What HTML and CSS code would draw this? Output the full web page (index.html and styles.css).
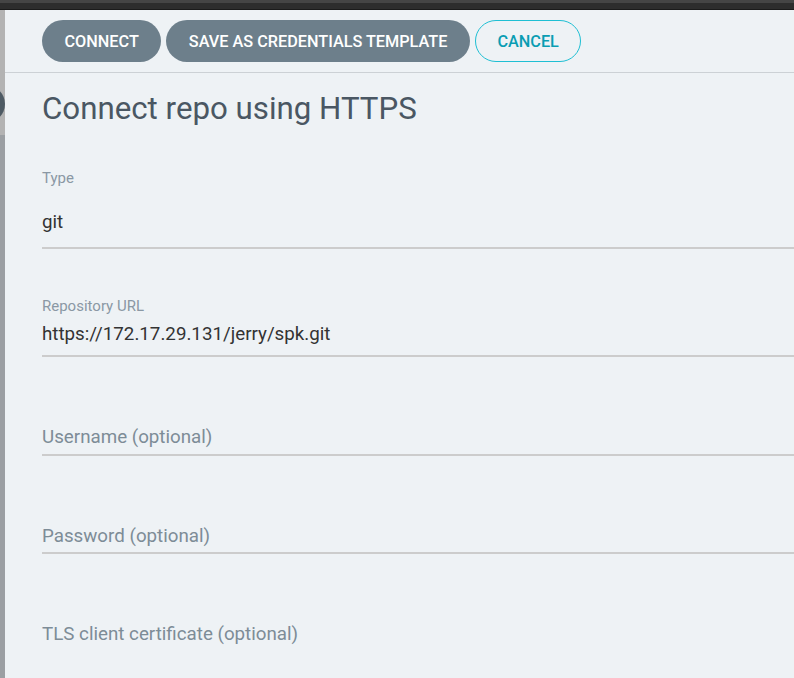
FILE: index.html
```html
<!DOCTYPE html>
<html lang="en">
<head>
    <meta charset="UTF-8">
    <meta name="viewport" content="width=device-width, initial-scale=1.0">
    <title>Connect repo using HTTPS</title>
    <link rel="stylesheet" href="styles.css">
</head>
<body>
    <div class="topbar"></div>
    <div class="layout">
        <div class="backdrop">
            <div class="backdrop-top">
                <div class="backdrop-dot"></div>
            </div>
            <div class="backdrop-bottom"></div>
        </div>

        <div class="panel">
            <div class="panel-header">
                <button class="btn">Connect</button>
                <button class="btn">Save as credentials template</button>
                <button class="btn btn-outline">Cancel</button>
            </div>

            <div class="panel-body">
                <h2 class="panel-title">Connect repo using HTTPS</h2>

                <div class="field field-select">
                    <div class="field-label">Type</div>
                    <div class="field-input">git</div>
                </div>

                <div class="field">
                    <div class="field-label">Repository URL</div>
                    <div class="field-input">https://172.17.29.131/jerry/spk.git</div>
                </div>

                <div class="field field-empty">
                    <div class="field-input placeholder">Username (optional)</div>
                </div>

                <div class="field field-empty">
                    <div class="field-input placeholder">Password (optional)</div>
                </div>

                <div class="field field-empty">
                    <div class="field-input field-textarea placeholder">TLS client certificate (optional)</div>
                </div>
            </div>
        </div>
    </div>
</body>
</html>
```

FILE: styles.css
```css
* {
    margin: 0;
    padding: 0;
    box-sizing: border-box;
}

body {
    font-family: Roboto, "Liberation Sans", Arial, sans-serif;
    background: #9b9fa3;
    height: 100vh;
    overflow: hidden;
}

.topbar {
    height: 10px;
    background: #2d2d2d;
    border-top: 3px solid #454545;
    border-bottom: 1px solid #1b1b1b;
}

.layout {
    display: flex;
    height: calc(100vh - 10px);
}

/* strip of the page behind the sliding panel */
.backdrop {
    width: 5px;
    flex-shrink: 0;
    display: flex;
    flex-direction: column;
    overflow: hidden;
}

.backdrop-top {
    height: 125px;
    background: #b3b3b3;
    padding-top: 75px;
}

.backdrop-dot {
    width: 38px;
    height: 38px;
    margin-left: -33px;
    border-radius: 50%;
    background: #4e5b64;
}

.backdrop-bottom {
    flex: 1;
    background: #9b9fa3;
}

.panel {
    flex: 1;
    background: #eef2f5;
    overflow: hidden;
}

.panel-header {
    display: flex;
    gap: 5px;
    padding: 10px 0 10px 37px;
    border-bottom: 1px solid #ccd1d5;
}

.btn {
    height: 42px;
    padding: 0 22.5px;
    border: none;
    border-radius: 21px;
    background: #6d7f8b;
    color: #fff;
    font-family: inherit;
    font-size: 16.25px;
    font-weight: 500;
    text-transform: uppercase;
    cursor: pointer;
}

.btn-outline {
    background: transparent;
    border: 1px solid #1fbfd3;
    color: #0a9db3;
    padding: 0 21.5px;
}

.panel-body {
    padding-left: 37px;
}

.panel-title {
    margin-top: 18px;
    font-size: 31.25px;
    line-height: 36px;
    font-weight: 400;
    color: #4a5763;
}

.field {
    margin-top: 49px;
}

.field-select {
    margin-top: 43px;
}

.field-label {
    font-size: 15px;
    line-height: 16px;
    color: #8a98a4;
}

.field-input {
    font-size: 18.75px;
    line-height: 24px;
    color: #333;
    padding: 8px 0 9px;
    border-bottom: 2px solid #cccccc;
    white-space: nowrap;
}

.field-select .field-input {
    padding: 24px 0 13px;
}

.field-empty .field-input {
    padding: 19px 0 4.5px;
}

.placeholder {
    color: #7d8c97;
}

.field-textarea {
    height: 120px;
}
```
